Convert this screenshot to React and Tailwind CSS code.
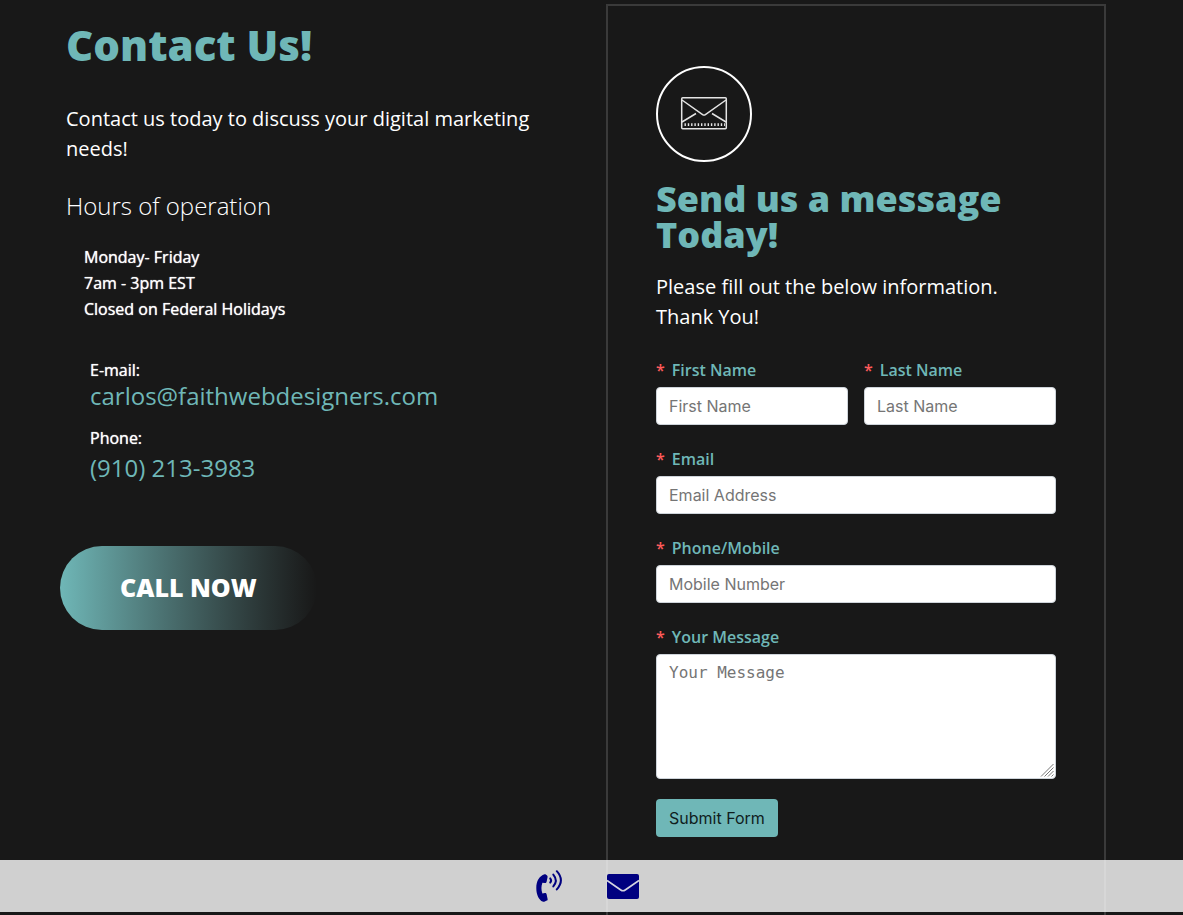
function Field({ id, label, children }) {
  return (
    <div className="min-w-0">
      <label htmlFor={id} className="mb-[5px] flex gap-[7px] text-base leading-6 font-semibold text-[#6fb7b7]">
        <span className="text-[#ff5b5b]">*</span>
        {label}
      </label>
      {children}
    </div>
  );
}

function TextInput(props) {
  return (
    <input className="block h-[38px] w-full rounded-[4px] border border-[#ced4da] bg-white px-3 font-[Inter,sans-serif] text-base text-gray-900 placeholder:text-[#757575]" {...props} />
  );
}

function MailBadge() {
  return (
    <svg className="block h-24 w-24" viewBox="0 0 96 96" fill="none" stroke="#fff" aria-hidden="true">
      <circle cx="48" cy="48" r="47" strokeWidth="2" />
      <g strokeWidth="1.5" stroke="#e4e4e4" strokeLinejoin="round">
        <rect x="25.7" y="31.7" width="44.6" height="31" rx="1" />
        <path d="M26 34 46.6 48.6Q48 49.5 49.4 48.6L70 34" />
        <path d="M26 56 40 47.5M70 56 56 47.5" />
        <path d="M28.5 58.7H69" strokeWidth="2.8" strokeDasharray="1.4 1.9" />
      </g>
    </svg>
  );
}

function PhoneIcon() {
  return (
    <svg className="h-8 w-7" viewBox="0 0 28 32" fill="none" stroke="#000080" strokeLinecap="round" aria-hidden="true">
      <path d="M8.6 4.3C3.2 6.2.3 11 .3 18.2c0 6.9 2.8 11.8 6.3 13.4.8.3 1.5.2 2.2-.1l2-.9c.7-.3 1-1 .8-1.700l-1-4.600c-.2-.8-.9-1.300-1.700-1.200l-2.500.3c-1.300-3.500-1.300-7.200 0-10.700l2.500.3c.8.1 1.500-.4 1.700-1.200l1-4.900c.1-.7-.2-1.300-.8-1.700l-1-.7c-.4-.3-.8-.3-1.200-.2z" fill="#000080" stroke="none" />
      <path d="M14.2 8.4Q16 10.5 14.2 12.6" strokeWidth="2" />
      <path d="M17.3 4.6Q22.3 10.5 17.3 16.4" strokeWidth="2" />
      <path d="M20.8 1.2Q29 10.3 20.8 19.4" strokeWidth="2" />
    </svg>
  );
}

function EnvelopeIcon() {
  return (
    <svg className="h-8 w-8" viewBox="0 0 32 32" aria-hidden="true">
      <rect y="4" width="32" height="25" rx="2" fill="#000080" />
      <path d="M0 10.4 13.8 20Q16 21.5 18.2 20L32 10.4" fill="none" stroke="#d4d4e0" strokeWidth="1.7" />
    </svg>
  );
}

function MessageBox() {
  return (
    <div className="relative">
      <textarea id="message" placeholder="Your Message" className="block h-[125px] w-full resize rounded-[4px] border border-[#ced4da] bg-white px-3 py-1.5 font-['DejaVu_Sans_Mono',monospace] text-base text-gray-900 placeholder:text-[#757575]" />
      <svg className="pointer-events-none absolute right-px bottom-px h-[15px] w-[15px]" viewBox="0 0 15 15" aria-hidden="true">
        <rect width="14" height="14" fill="#fff" />
        <path d="M1 13.5 13.5 1M4.5 13.5 13.5 4.5M8 13.5 13.5 8M11.5 13.5 13.5 11.5" stroke="#777" />
      </svg>
    </div>
  );
}

function ContactInfo() {
  return (
    <section className="min-w-0 pt-5">
      <div className="pl-1.5">
        <h1 className="text-[42px] leading-[50px] font-extrabold text-[#6fb7b7]">Contact Us!</h1>
        <p className="mt-[34px] max-w-[500px] text-xl leading-[30px]">Contact us today to discuss your digital marketing needs!</p>
        <h2 className="mt-[27px] text-2xl leading-[30px] font-light">Hours of operation</h2>
        <p className="mt-[23px] pl-[18px] text-base leading-[26px] text-shadow-[0_0_1px_#fff]">
          Monday- Friday<br />
          7am - 3pm EST<br />
          Closed on Federal Holidays
        </p>
        <dl className="mt-9 pl-6">
          <dt className="text-base leading-6 text-shadow-[0_0_1px_#fff]">E-mail:</dt>
          <dd className="text-2xl leading-7 text-[#6fb7b7]"><a href="mailto:carlos@faithwebdesigners.com">carlos@faithwebdesigners.com</a></dd>
          <dt className="mt-4 text-base leading-6 text-shadow-[0_0_1px_#fff]">Phone:</dt>
          <dd className="mt-1 text-2xl leading-7 text-[#6fb7b7]"><a href="tel:9102133983">(910) 213-3983</a></dd>
        </dl>
      </div>
      <a href="tel:9102133983" className="mt-16 inline-flex h-[84px] items-center rounded-full bg-linear-to-r from-[#6fb7b7] to-[#181818] px-[60px] text-[25px] font-extrabold">CALL NOW</a>
    </section>
  );
}

function MessageForm() {
  return (
    <section className="mt-1 min-w-0 border-2 border-b-0 border-[#3a3a3a] px-12 pt-[60px] pb-24">
      <MailBadge />
      <h2 className="mt-[19px] text-4xl leading-9 font-extrabold text-[#6fb7b7]">Send us a message Today!</h2>
      <p className="mt-[19px] text-xl leading-[30px]">Please fill out the below information.<br />Thank You!</p>
      <form className="mt-[26px]" onSubmit={(e) => e.preventDefault()}>
        <div className="flex flex-col gap-[22px]">
          <div className="grid grid-cols-2 gap-4">
            <Field id="first-name" label="First Name"><TextInput id="first-name" type="text" placeholder="First Name" /></Field>
            <Field id="last-name" label="Last Name"><TextInput id="last-name" type="text" placeholder="Last Name" /></Field>
          </div>
          <Field id="email" label="Email"><TextInput id="email" type="email" placeholder="Email Address" /></Field>
          <Field id="phone" label="Phone/Mobile"><TextInput id="phone" type="tel" placeholder="Mobile Number" /></Field>
          <Field id="message" label="Your Message"><MessageBox /></Field>
        </div>
        <button type="submit" className="mt-5 h-[38px] rounded-[4px] bg-[#6fb7b7] px-[13px] font-[Inter,sans-serif] text-base text-[#101d1d]">Submit Form</button>
      </form>
    </section>
  );
}

export default function App() {
  return (
    <div className="h-screen overflow-hidden bg-[#181818] font-['Open_Sans',sans-serif] text-white">
      <main className="grid min-h-screen grid-cols-[546fr_500fr] pr-[77px] pl-[60px]">
        <ContactInfo />
        <MessageForm />
      </main>
      <nav className="fixed inset-x-0 bottom-[3px] flex h-[52px] items-center justify-center gap-[43px] bg-white/80 pr-2" aria-label="Quick contact">
        <a href="tel:9102133983" aria-label="Call"><PhoneIcon /></a>
        <a href="mailto:carlos@faithwebdesigners.com" aria-label="Email"><EnvelopeIcon /></a>
      </nav>
    </div>
  );
}
